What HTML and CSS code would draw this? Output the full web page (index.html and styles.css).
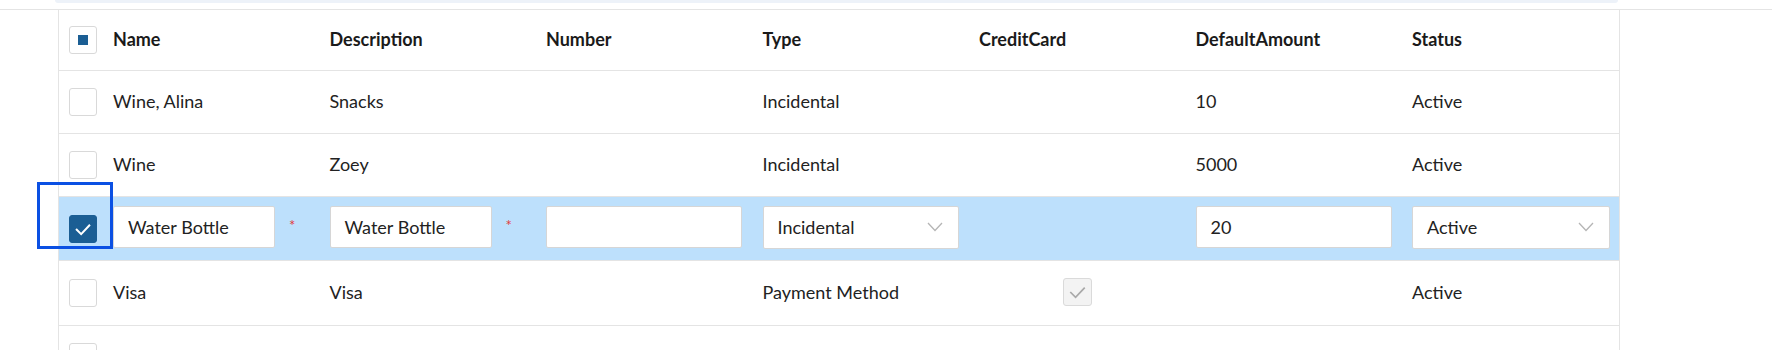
FILE: index.html
```html
<!doctype html>
<html lang="en">
    <head>
        <meta charset="UTF-8" />
        <title>Expense Items</title>
        <link rel="stylesheet" href="styles.css">
    </head>
    <body>
        <div class="toolbar-edge"></div>
        <div class="page">
            <div class="grid">
                <div class="row head">
                    <div class="cell check-cell">
                        <span class="box partial"><span class="dot"></span></span>
                    </div>
                    <div class="cell">Name</div>
                    <div class="cell">Description</div>
                    <div class="cell">Number</div>
                    <div class="cell">Type</div>
                    <div class="cell">CreditCard</div>
                    <div class="cell">DefaultAmount</div>
                    <div class="cell last">Status</div>
                </div>

                <div class="row">
                    <div class="cell check-cell"><span class="box"></span></div>
                    <div class="cell">Wine, Alina</div>
                    <div class="cell">Snacks</div>
                    <div class="cell"></div>
                    <div class="cell">Incidental</div>
                    <div class="cell"></div>
                    <div class="cell">10</div>
                    <div class="cell last">Active</div>
                </div>

                <div class="row">
                    <div class="cell check-cell"><span class="box"></span></div>
                    <div class="cell">Wine</div>
                    <div class="cell">Zoey</div>
                    <div class="cell"></div>
                    <div class="cell">Incidental</div>
                    <div class="cell"></div>
                    <div class="cell">5000</div>
                    <div class="cell last">Active</div>
                </div>

                <div class="row editing">
                    <div class="focus-ring"></div>
                    <div class="cell check-cell">
                        <span class="box checked">
                            <svg width="28" height="28" viewBox="0 0 28 28"><polyline points="6.5,14 12,19.5 21.5,9.5" /></svg>
                        </span>
                    </div>
                    <div class="cell">
                        <span class="field short">Water Bottle</span><span class="req">*</span>
                    </div>
                    <div class="cell">
                        <span class="field short">Water Bottle</span><span class="req">*</span>
                    </div>
                    <div class="cell"><span class="field"></span></div>
                    <div class="cell">
                        <span class="field select">Incidental
                            <svg class="chev" width="16" height="10" viewBox="0 0 16 10"><polyline points="1,1 8,8.5 15,1" /></svg>
                        </span>
                    </div>
                    <div class="cell"></div>
                    <div class="cell"><span class="field">20</span></div>
                    <div class="cell last">
                        <span class="field select wide">Active
                            <svg class="chev" width="16" height="10" viewBox="0 0 16 10"><polyline points="1,1 8,8.5 15,1" /></svg>
                        </span>
                    </div>
                </div>

                <div class="row tall">
                    <div class="cell check-cell"><span class="box"></span></div>
                    <div class="cell">Visa</div>
                    <div class="cell">Visa</div>
                    <div class="cell"></div>
                    <div class="cell">Payment Method</div>
                    <div class="cell center">
                        <span class="box disabled">
                            <svg width="28" height="28" viewBox="0 0 28 28"><polyline points="6.5,14 12,19.5 21.5,9.5" /></svg>
                        </span>
                    </div>
                    <div class="cell"></div>
                    <div class="cell last">Active</div>
                </div>

                <div class="row">
                    <div class="cell check-cell"><span class="box"></span></div>
                    <div class="cell"></div>
                </div>
            </div>
        </div>
    </body>
</html>
```

FILE: styles.css
```css
body {
    margin: 0;
    font-family: "Lato", "Open Sans", sans-serif;
    font-size: 18px;
    color: #222;
    background: #fff;
}

.toolbar-edge {
    height: 3px;
    margin: 0 154px 0 55px;
    background: #edf2f9;
    border-radius: 0 0 4px 4px;
}

.page {
    margin-top: 6px;
    border-top: 1px solid #e4e4e4;
    height: 341px;
    overflow: hidden;
}

.grid {
    margin-left: 58px;
    width: 1560px;
    border-left: 1px solid #e4e4e4;
    border-right: 1px solid #e4e4e4;
}

.row {
    position: relative;
    display: flex;
    align-items: center;
    height: 62px;
    border-bottom: 1px solid #e4e4e4;
}

.row.head {
    height: 60px;
    font-weight: bold;
    color: #1a1a1a;
}

.row.editing {
    height: 63px;
    background: #bde0fc;
}

.row.tall {
    height: 64px;
}

.cell {
    display: flex;
    align-items: center;
    width: 196px;
    padding-right: 20.5px;
    padding-bottom: 3px;
    flex: none;
}

.cell.last {
    width: 199px;
    padding-right: 8px;
}

.cell.center {
    justify-content: center;
}

.check-cell {
    width: 44px;
    padding: 0 0 0 10px;
}

.box {
    display: flex;
    align-items: center;
    justify-content: center;
    box-sizing: border-box;
    width: 28px;
    height: 28px;
    background: #fff;
    border: 1px solid #d9d9d9;
    border-radius: 3px;
}

.box .dot {
    width: 10px;
    height: 10px;
    background: #1b5e94;
}

.box.checked {
    background: #1b5e94;
    border-color: #1b5e94;
}

.box svg polyline {
    fill: none;
    stroke: #fff;
    stroke-width: 2.2;
}

.box.disabled {
    width: 29px;
    background: #f3f3f3;
    border-color: #dadada;
}

.box.disabled svg polyline {
    stroke: #a9a9a9;
    stroke-width: 1.8;
}

.field {
    display: flex;
    align-items: center;
    box-sizing: border-box;
    width: 196px;
    height: 42px;
    padding: 0 14px;
    background: #fff;
    border: 1px solid #d6d6d6;
    border-radius: 2px;
}

.field.short {
    width: 162px;
}

.field.select {
    justify-content: space-between;
    height: 43px;
}

.field.wide {
    width: 198px;
}

.chev polyline {
    fill: none;
    stroke: #b5b5b5;
    stroke-width: 1.3;
}

.chev {
    margin-right: 1px;
}

.req {
    margin-left: 14px;
    margin-top: -4px;
    color: #e33a3a;
    font-size: 15px;
}

.focus-ring {
    position: absolute;
    left: -22px;
    top: -15px;
    width: 70px;
    height: 61px;
    border: 3px solid #0b50e3;
}
```
